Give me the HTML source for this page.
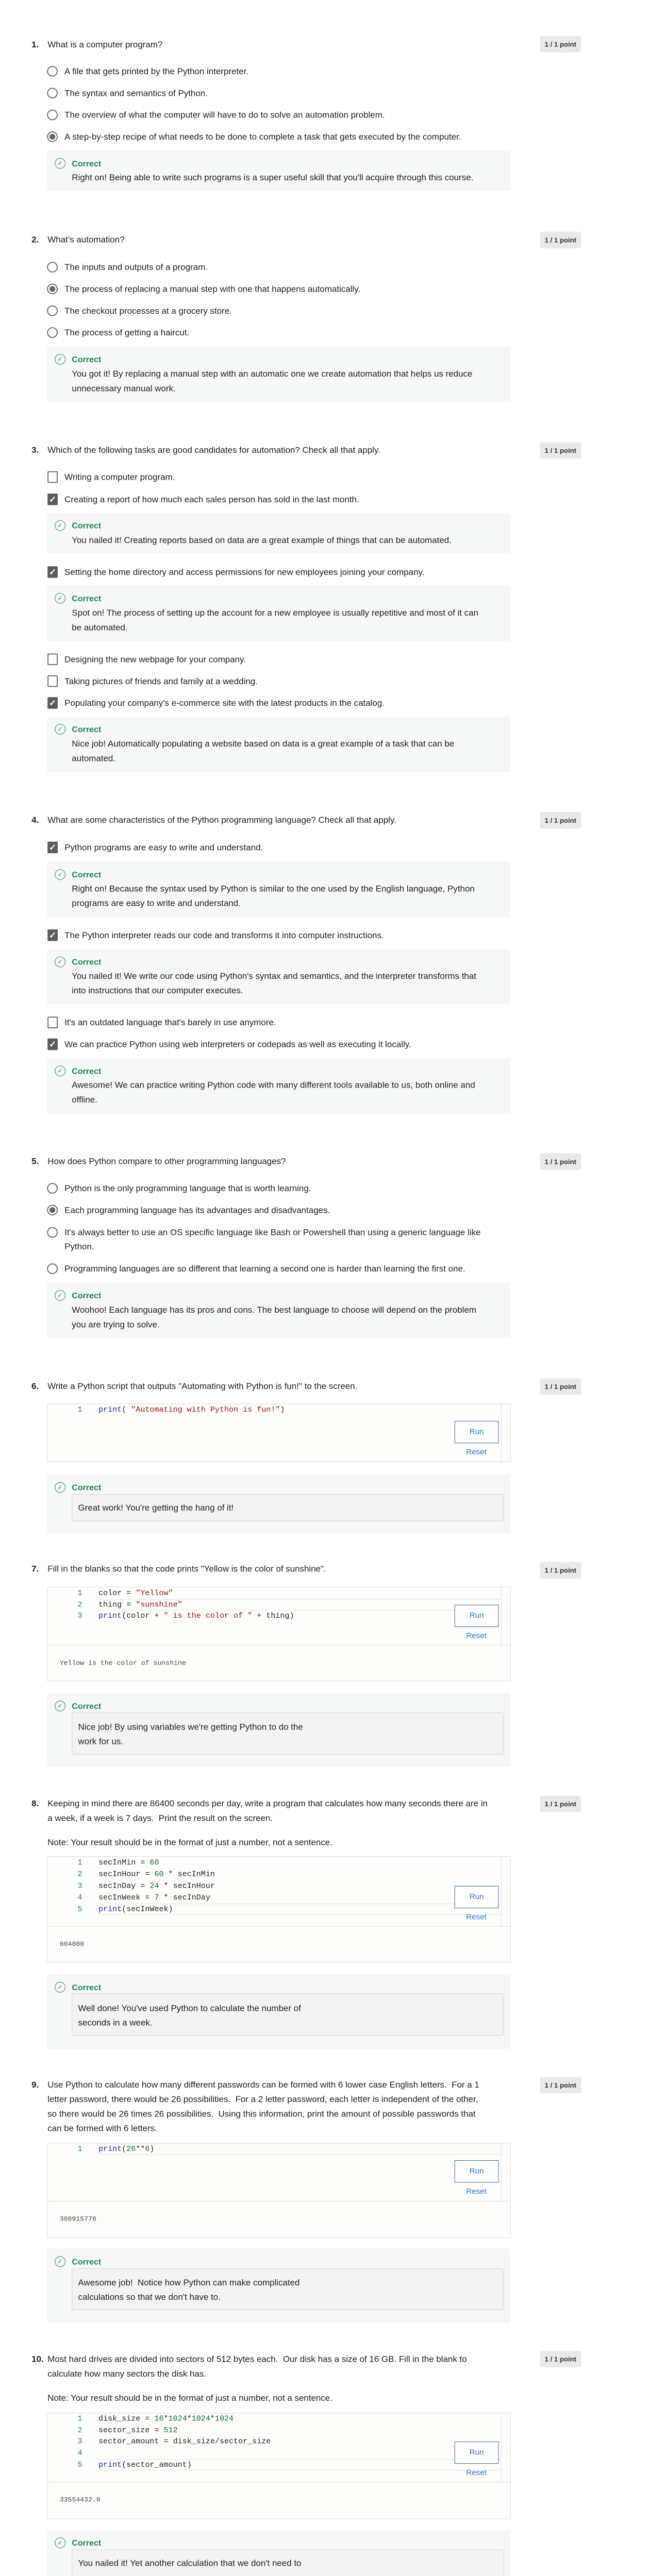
<!DOCTYPE html>
<html><head><meta charset="utf-8"><style>
html,body{margin:0;padding:0;background:#fff;width:1292px;height:5314px;overflow:hidden}
#w{position:relative;width:1292px;height:5314px;overflow:hidden;font-family:"Liberation Sans",sans-serif;font-size:18px;color:#1f1f1f;transform:scale(0.941);transform-origin:0 0}
.a{position:absolute;white-space:nowrap;line-height:30px}
.q{left:65px;font-weight:bold}
.qt{left:98px}
.o{left:133px}
.b{position:absolute;left:1113px;width:85px;height:34px;background:#e8e9ea;border-radius:4px;font-weight:bold;font-size:14px;line-height:34px;text-align:center;color:#333}
.r{position:absolute;left:97px;width:18px;height:18px;border:2px solid #666;border-radius:50%}
.r.on::after{content:"";position:absolute;left:3px;top:3px;width:12px;height:12px;border-radius:50%;background:#666}
.c{position:absolute;left:98px;width:17px;height:20px;border:2px solid #666;border-radius:2px;box-sizing:content-box}
.c.on{background:#5c5c5c;border-color:#5c5c5c;color:#fff;font-size:18px;font-weight:bold;line-height:20px;text-align:center}
.fb{position:absolute;left:97px;width:955px;background:#f5f8f6}
.ic{position:absolute;left:113px;width:20px;height:20px;border:1.5px solid #1f8354;border-radius:50%;color:#1f8354;font-size:13px;line-height:20px;text-align:center}
.lb{left:148px;color:#1f8354;font-weight:bold;font-size:17px}
.ft{left:148px}
.gb{position:absolute;left:148px;width:888px;background:#f3f3f3;border:1px solid #cfcfcf;border-radius:3px}
.gt{left:161px}
.cb{position:absolute;left:97px;width:954px;border:1px solid #dcdcdc;background:#fdfdfb}
.gut{position:absolute;left:1033px;width:1px;background:#ddd}
.m{font-family:"Liberation Mono",monospace;font-size:16px;line-height:24px}
.ln{left:160px;color:#237893}
.cd{left:203px;color:#222}
.k{color:#2020c0}.s{color:#a31515}.n{color:#116644}
.run{position:absolute;left:937px;width:89px;height:44px;border:1px solid #2a5a9a;color:#2a73cc;font-size:16px;line-height:44px;text-align:center;background:#fff}
.rs{left:937px;width:90px;text-align:center;color:#2a73cc;font-size:16px}
.out{left:123px;font-family:"Liberation Mono",monospace;font-size:14px;color:#444}
.hl{position:absolute;left:203px;width:830px;height:24px;border-top:2px solid #eee;border-bottom:2px solid #eee;box-sizing:border-box}
</style></head><body><div id="w">

<!-- Q1 -->
<div class="a q" style="top:77px">1.</div><div class="a qt" style="top:77px">What is a computer program?</div>
<div class="b" style="top:74px">1 / 1 point</div>
<div class="r" style="top:136px"></div><div class="a o" style="top:132px">A file that gets printed by the Python interpreter.</div>
<div class="r" style="top:181px"></div><div class="a o" style="top:177px">The syntax and semantics of Python.</div>
<div class="r" style="top:226px"></div><div class="a o" style="top:222px">The overview of what the computer will have to do to solve an automation problem.</div>
<div class="r on" style="top:271px"></div><div class="a o" style="top:267px">A step-by-step recipe of what needs to be done to complete a task that gets executed by the computer.</div>
<div class="fb" style="top:310px;height:83px"></div>
<div class="ic" style="top:326px">✓</div><div class="a lb" style="top:323px">Correct</div>
<div class="a ft" style="top:351px">Right on! Being able to write such programs is a super useful skill that you'll acquire through this course.</div>

<!-- Q2 -->
<div class="a q" style="top:479px">2.</div><div class="a qt" style="top:479px">What’s automation?</div>
<div class="b" style="top:478px">1 / 1 point</div>
<div class="r" style="top:540px"></div><div class="a o" style="top:536px">The inputs and outputs of a program.</div>
<div class="r on" style="top:585px"></div><div class="a o" style="top:581px">The process of replacing a manual step with one that happens automatically.</div>
<div class="r" style="top:630px"></div><div class="a o" style="top:626px">The checkout processes at a grocery store.</div>
<div class="r" style="top:675px"></div><div class="a o" style="top:671px">The process of getting a haircut.</div>
<div class="fb" style="top:715px;height:114px"></div>
<div class="ic" style="top:730px">✓</div><div class="a lb" style="top:727px">Correct</div>
<div class="a ft" style="top:756px">You got it! By replacing a manual step with an automatic one we create automation that helps us reduce</div>
<div class="a ft" style="top:786px">unnecessary manual work.</div>

<!-- Q3 -->
<div class="a q" style="top:913px">3.</div><div class="a qt" style="top:913px">Which of the following tasks are good candidates for automation? Check all that apply.</div>
<div class="b" style="top:912px">1 / 1 point</div>
<div class="c" style="top:972px"></div><div class="a o" style="top:969px">Writing a computer program.</div>
<div class="c on" style="top:1018px">✓</div><div class="a o" style="top:1015px">Creating a report of how much each sales person has sold in the last month.</div>
<div class="fb" style="top:1058px;height:84px"></div>
<div class="ic" style="top:1073px">✓</div><div class="a lb" style="top:1070px">Correct</div>
<div class="a ft" style="top:1099px">You nailed it! Creating reports based on data are a great example of things that can be automated.</div>
<div class="c on" style="top:1168px">✓</div><div class="a o" style="top:1165px">Setting the home directory and access permissions for new employees joining your company.</div>
<div class="fb" style="top:1208px;height:114px"></div>
<div class="ic" style="top:1223px">✓</div><div class="a lb" style="top:1220px">Correct</div>
<div class="a ft" style="top:1249px">Spot on! The process of setting up the account for a new employee is usually repetitive and most of it can</div>
<div class="a ft" style="top:1279px">be automated.</div>
<div class="c" style="top:1348px"></div><div class="a o" style="top:1345px">Designing the new webpage for your company.</div>
<div class="c" style="top:1393px"></div><div class="a o" style="top:1390px">Taking pictures of friends and family at a wedding.</div>
<div class="c on" style="top:1438px">✓</div><div class="a o" style="top:1435px">Populating your company's e-commerce site with the latest products in the catalog.</div>
<div class="fb" style="top:1478px;height:115px"></div>
<div class="ic" style="top:1493px">✓</div><div class="a lb" style="top:1490px">Correct</div>
<div class="a ft" style="top:1519px">Nice job! Automatically populating a website based on data is a great example of a task that can be</div>
<div class="a ft" style="top:1549px">automated.</div>

<!-- Q4 -->
<div class="a q" style="top:1676px">4.</div><div class="a qt" style="top:1676px">What are some characteristics of the Python programming language? Check all that apply.</div>
<div class="b" style="top:1675px">1 / 1 point</div>
<div class="c on" style="top:1736px">✓</div><div class="a o" style="top:1733px">Python programs are easy to write and understand.</div>
<div class="fb" style="top:1777px;height:115px"></div>
<div class="ic" style="top:1793px">✓</div><div class="a lb" style="top:1790px">Correct</div>
<div class="a ft" style="top:1818px">Right on! Because the syntax used by Python is similar to the one used by the English language, Python</div>
<div class="a ft" style="top:1848px">programs are easy to write and understand.</div>
<div class="c on" style="top:1917px">✓</div><div class="a o" style="top:1914px">The Python interpreter reads our code and transforms it into computer instructions.</div>
<div class="fb" style="top:1958px;height:114px"></div>
<div class="ic" style="top:1973px">✓</div><div class="a lb" style="top:1970px">Correct</div>
<div class="a ft" style="top:1998px">You nailed it! We write our code using Python's syntax and semantics, and the interpreter transforms that</div>
<div class="a ft" style="top:2028px">into instructions that our computer executes.</div>
<div class="c" style="top:2097px"></div><div class="a o" style="top:2094px">It's an outdated language that's barely in use anymore.</div>
<div class="c on" style="top:2142px">✓</div><div class="a o" style="top:2139px">We can practice Python using web interpreters or codepads as well as executing it locally.</div>
<div class="fb" style="top:2183px;height:115px"></div>
<div class="ic" style="top:2198px">✓</div><div class="a lb" style="top:2195px">Correct</div>
<div class="a ft" style="top:2223px">Awesome! We can practice writing Python code with many different tools available to us, both online and</div>
<div class="a ft" style="top:2253px">offline.</div>

<!-- Q5 -->
<div class="a q" style="top:2380px">5.</div><div class="a qt" style="top:2380px">How does Python compare to other programming languages?</div>
<div class="b" style="top:2379px">1 / 1 point</div>
<div class="r" style="top:2440px"></div><div class="a o" style="top:2436px">Python is the only programming language that is worth learning.</div>
<div class="r on" style="top:2485px"></div><div class="a o" style="top:2481px">Each programming language has its advantages and disadvantages.</div>
<div class="r" style="top:2531px"></div><div class="a o" style="top:2527px">It's always better to use an OS specific language like Bash or Powershell than using a generic language like</div>
<div class="a o" style="top:2556px">Python.</div>
<div class="r" style="top:2606px"></div><div class="a o" style="top:2602px">Programming languages are so different that learning a second one is harder than learning the first one.</div>
<div class="fb" style="top:2646px;height:114px"></div>
<div class="ic" style="top:2661px">✓</div><div class="a lb" style="top:2658px">Correct</div>
<div class="a ft" style="top:2687px">Woohoo! Each language has its pros and cons. The best language to choose will depend on the problem</div>
<div class="a ft" style="top:2717px">you are trying to solve.</div>

<!-- Q6 -->
<div class="a q" style="top:2844px">6.</div><div class="a qt" style="top:2844px">Write a Python script that outputs "Automating with Python is fun!" to the screen.</div>
<div class="b" style="top:2843px">1 / 1 point</div>
<div class="cb" style="top:2895px;height:118px"></div><div class="gut" style="top:2896px;height:118px"></div>
<div class="a m ln" style="top:2896px">1</div><div class="a m cd" style="top:2896px"><span class="k">print</span>( <span class="s">"Automating with Python is fun!"</span>)</div>
<div class="run" style="top:2931px">Run</div><div class="a rs" style="top:2981px">Reset</div>
<div class="fb" style="top:3041px;height:122px"></div>
<div class="ic" style="top:3057px">✓</div><div class="a lb" style="top:3054px">Correct</div>
<div class="gb" style="top:3082px;height:54px"></div>
<div class="a gt" style="top:3095px">Great work! You're getting the hang of it!</div>

<!-- Q7 -->
<div class="a q" style="top:3221px">7.</div><div class="a qt" style="top:3221px">Fill in the blanks so that the code prints "Yellow is the color of sunshine".</div>
<div class="b" style="top:3222px">1 / 1 point</div>
<div class="cb" style="top:3273px;height:193px"></div><div class="gut" style="top:3274px;height:119px"></div>
<div style="position:absolute;left:98px;top:3393px;width:954px;height:1px;background:#dcdcdc"></div>
<div class="hl" style="top:3298px"></div>
<div class="a m ln" style="top:3274px">1</div><div class="a m cd" style="top:3274px">color = <span class="s">"Yellow"</span></div>
<div class="a m ln" style="top:3298px">2</div><div class="a m cd" style="top:3298px">thing = <span class="s">"sunshine"</span></div>
<div class="a m ln" style="top:3321px">3</div><div class="a m cd" style="top:3321px"><span class="k">print</span>(color + <span class="s">" is the color of "</span> + thing)</div>
<div class="run" style="top:3310px">Run</div><div class="a rs" style="top:3360px">Reset</div>
<div class="a out" style="top:3416px">Yellow is the color of sunshine</div>
<div class="fb" style="top:3492px;height:153px"></div>
<div class="ic" style="top:3508px">✓</div><div class="a lb" style="top:3505px">Correct</div>
<div class="gb" style="top:3532px;height:85px"></div>
<div class="a gt" style="top:3547px">Nice job! By using variables we're getting Python to do the</div>
<div class="a gt" style="top:3577px">work for us.</div>

<!-- Q8 -->
<div class="a q" style="top:3705px">8.</div><div class="a qt" style="top:3705px">Keeping in mind there are 86400 seconds per day, write a program that calculates how many seconds there are in</div>
<div class="a qt" style="top:3735px">a week, if a week is 7 days.&nbsp; Print the result on the screen.</div>
<div class="b" style="top:3704px">1 / 1 point</div>
<div class="a qt" style="top:3785px">Note: Your result should be in the format of just a number, not a sentence.</div>
<div class="cb" style="top:3829px;height:217px"></div><div class="gut" style="top:3830px;height:143px"></div>
<div style="position:absolute;left:98px;top:3973px;width:954px;height:1px;background:#dcdcdc"></div>
<div class="hl" style="top:3926px"></div>
<div class="a m ln" style="top:3830px">1</div><div class="a m cd" style="top:3830px">secInMin = <span class="n">60</span></div>
<div class="a m ln" style="top:3854px">2</div><div class="a m cd" style="top:3854px">secInHour = <span class="n">60</span> * secInMin</div>
<div class="a m ln" style="top:3878px">3</div><div class="a m cd" style="top:3878px">secInDay = <span class="n">24</span> * secInHour</div>
<div class="a m ln" style="top:3902px">4</div><div class="a m cd" style="top:3902px">secInWeek = <span class="n">7</span> * secInDay</div>
<div class="a m ln" style="top:3926px">5</div><div class="a m cd" style="top:3926px"><span class="k">print</span>(secInWeek)</div>
<div class="run" style="top:3890px">Run</div><div class="a rs" style="top:3940px">Reset</div>
<div class="a out" style="top:3996px">604800</div>
<div class="fb" style="top:4072px;height:154px"></div>
<div class="ic" style="top:4088px">✓</div><div class="a lb" style="top:4085px">Correct</div>
<div class="gb" style="top:4112px;height:85px"></div>
<div class="a gt" style="top:4127px">Well done! You've used Python to calculate the number of</div>
<div class="a gt" style="top:4157px">seconds in a week.</div>

<!-- Q9 -->
<div class="a q" style="top:4285px">9.</div><div class="a qt" style="top:4285px">Use Python to calculate how many different passwords can be formed with 6 lower case English letters.&nbsp; For a 1</div>
<div class="a qt" style="top:4315px">letter password, there would be 26 possibilities.&nbsp; For a 2 letter password, each letter is independent of the other,</div>
<div class="a qt" style="top:4345px">so there would be 26 times 26 possibilities.&nbsp; Using this information, print the amount of possible passwords that</div>
<div class="a qt" style="top:4375px">can be formed with 6 letters.</div>
<div class="b" style="top:4284px">1 / 1 point</div>
<div class="cb" style="top:4420px;height:194px"></div><div class="gut" style="top:4421px;height:119px"></div>
<div style="position:absolute;left:98px;top:4540px;width:954px;height:1px;background:#dcdcdc"></div>
<div class="hl" style="top:4421px"></div>
<div class="a m ln" style="top:4421px">1</div><div class="a m cd" style="top:4421px"><span class="k">print</span>(<span class="n">26</span>**<span class="n">6</span>)</div>
<div class="run" style="top:4456px">Run</div><div class="a rs" style="top:4506px">Reset</div>
<div class="a out" style="top:4563px">308915776</div>
<div class="fb" style="top:4638px;height:154px"></div>
<div class="ic" style="top:4654px">✓</div><div class="a lb" style="top:4651px">Correct</div>
<div class="gb" style="top:4679px;height:84px"></div>
<div class="a gt" style="top:4693px">Awesome job!&nbsp; Notice how Python can make complicated</div>
<div class="a gt" style="top:4723px">calculations so that we don't have to.</div>

<!-- Q10 -->
<div class="a q" style="top:4851px">10.</div><div class="a qt" style="top:4851px">Most hard drives are divided into sectors of 512 bytes each.&nbsp; Our disk has a size of 16 GB. Fill in the blank to</div>
<div class="a qt" style="top:4881px">calculate how many sectors the disk has.</div>
<div class="b" style="top:4849px">1 / 1 point</div>
<div class="a qt" style="top:4931px">Note: Your result should be in the format of just a number, not a sentence.</div>
<div class="cb" style="top:4977px;height:217px"></div><div class="gut" style="top:4978px;height:141px"></div>
<div style="position:absolute;left:98px;top:5119px;width:954px;height:1px;background:#dcdcdc"></div>
<div class="hl" style="top:5072px"></div>
<div class="a m ln" style="top:4977px">1</div><div class="a m cd" style="top:4977px">disk_size = <span class="n">16</span>*<span class="n">1024</span>*<span class="n">1024</span>*<span class="n">1024</span></div>
<div class="a m ln" style="top:5001px">2</div><div class="a m cd" style="top:5001px">sector_size = <span class="n">512</span></div>
<div class="a m ln" style="top:5024px">3</div><div class="a m cd" style="top:5024px">sector_amount = disk_size/sector_size</div>
<div class="a m ln" style="top:5048px">4</div>
<div class="a m ln" style="top:5072px">5</div><div class="a m cd" style="top:5072px"><span class="k">print</span>(sector_amount)</div>
<div class="run" style="top:5036px">Run</div><div class="a rs" style="top:5086px">Reset</div>
<div class="a out" style="top:5142px">33554432.0</div>
<div class="fb" style="top:5219px;height:95px"></div>
<div class="ic" style="top:5234px">✓</div><div class="a lb" style="top:5231px">Correct</div>
<div class="gb" style="top:5259px;height:54px;border-bottom:none"></div>
<div class="a gt" style="top:5272px">You nailed it! Yet another calculation that we don't need to</div>

</div></body></html>
